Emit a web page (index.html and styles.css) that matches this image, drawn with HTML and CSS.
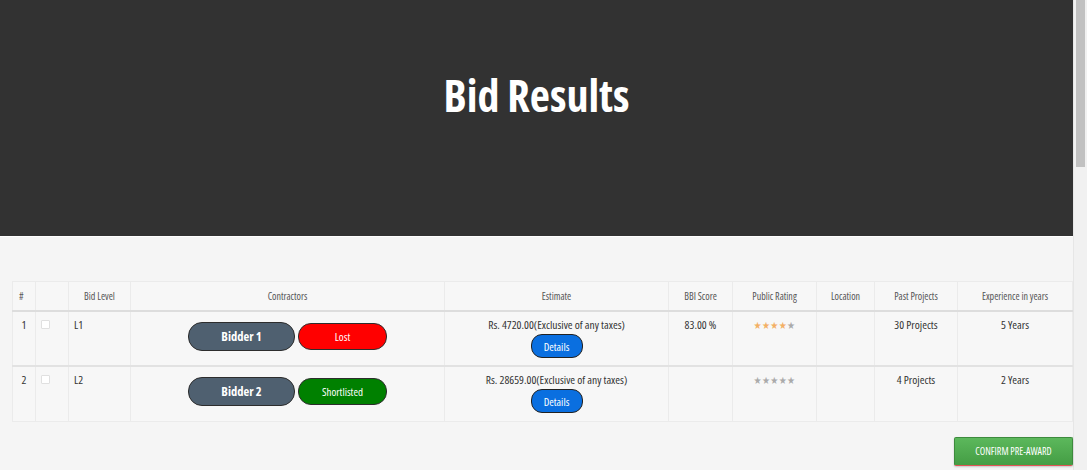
FILE: index.html
```html
<!DOCTYPE html>
<html lang="en">
    <head>
        <meta charset="UTF-8">
        <meta name="viewport" content="width=device-width, initial-scale=1.0">
        <title>Bid Results</title>
        <link rel="stylesheet" href="styles.css">
    </head>
<body>
    <div class="window">
        <div class="page">
            <header class="hero">
                <h1>Bid Results</h1>
            </header>

            <div class="container">
                <table class="results">
                    <colgroup>
                        <col style="width: 23px">
                        <col style="width: 33px">
                        <col style="width: 62px">
                        <col style="width: 314px">
                        <col style="width: 224px">
                        <col style="width: 64px">
                        <col style="width: 84px">
                        <col style="width: 58px">
                        <col style="width: 83px">
                        <col style="width: 115px">
                    </colgroup>
                    <thead>
                        <tr>
                            <th class="num">#</th>
                            <th></th>
                            <th>Bid Level</th>
                            <th>Contractors</th>
                            <th>Estimate</th>
                            <th>BBI Score</th>
                            <th>Public Rating</th>
                            <th>Location</th>
                            <th>Past Projects</th>
                            <th>Experience in years</th>
                        </tr>
                    </thead>
                    <tbody>
                        <tr>
                            <td class="center">1</td>
                            <td><input type="checkbox" class="pick"></td>
                            <td>L1</td>
                            <td class="center">
                                <div class="contractor">
                                    <button class="bidder">Bidder 1</button>
                                    <button class="status lost">Lost</button>
                                </div>
                            </td>
                            <td class="center">
                                Rs. 4720.00(Exclusive of any taxes)
                                <div><button class="details">Details</button></div>
                            </td>
                            <td class="center">83.00 %</td>
                            <td class="center">
                                <span class="stars"><span class="on">★★★★</span>★</span>
                            </td>
                            <td></td>
                            <td class="center">30 Projects</td>
                            <td class="center">5 Years</td>
                        </tr>
                        <tr>
                            <td class="center">2</td>
                            <td><input type="checkbox" class="pick"></td>
                            <td>L2</td>
                            <td class="center">
                                <div class="contractor">
                                    <button class="bidder">Bidder 2</button>
                                    <button class="status shortlisted">Shortlisted</button>
                                </div>
                            </td>
                            <td class="center">
                                Rs. 28659.00(Exclusive of any taxes)
                                <div><button class="details">Details</button></div>
                            </td>
                            <td></td>
                            <td class="center">
                                <span class="stars">★★★★★</span>
                            </td>
                            <td></td>
                            <td class="center">4 Projects</td>
                            <td class="center">2 Years</td>
                        </tr>
                    </tbody>
                </table>

                <div class="actions">
                    <button class="confirm">CONFIRM PRE-AWARD</button>
                </div>
            </div>
        </div>

        <div class="scrollbar">
            <div class="thumb"></div>
        </div>
    </div>
</body>
</html>
```

FILE: styles.css
```css
    html, body {
        height: 100%;
    }
    body {
        font-family: "Open Sans", Arial, sans-serif;
        font-stretch: 75%;
        margin: 0;
        padding: 0;
        background-color: #f5f5f5;
        color: #333;
        overflow: hidden;
    }
    .window {
        display: flex;
        height: 470px;
    }
    .page {
        flex: 1;
        border-right: 1px solid #e6e6e6;
    }
    .hero {
        background-color: #323232;
        height: 237px;
        border-bottom: 1px solid #ffffff;
        box-sizing: border-box;
        text-align: center;
        padding-top: 67px;
    }
    .hero h1 {
        margin: 0;
        color: #ffffff;
        font-size: 44px;
        font-weight: 700;
        line-height: 56px;
    }
    .container {
        padding: 44px 0 0 12px;
    }
    .results {
        width: 1060px;
        table-layout: fixed;
        border-collapse: collapse;
        background-color: #f7f7f7;
        font-size: 11.5px;
    }
    .results th {
        height: 28px;
        font-size: 10px;
        font-weight: 400;
        color: #555;
        text-align: center;
        border: 1px solid #ebebeb;
        border-bottom: 2px solid #dddddd;
        padding: 0 4px;
    }
    .results th.num {
        text-align: left;
        padding-left: 6px;
    }
    .results td {
        height: 55px;
        vertical-align: top;
        padding: 5px 5px 0;
        border: 1px solid #ebebeb;
        border-top: 2px solid #e2e2e2;
        box-sizing: border-box;
    }
    .center {
        text-align: center;
    }
    .pick {
        appearance: none;
        width: 9px;
        height: 9px;
        margin: 1px 0 0;
        background: #ffffff;
        border: 1px solid #e0e0e0;
        border-radius: 1px;
    }
    .contractor {
        display: flex;
        justify-content: center;
        gap: 3px;
        margin-top: 5px;
    }
    .bidder {
        width: 107px;
        height: 29px;
        background-color: #4f6070;
        color: #ffffff;
        font-family: inherit;
        font-stretch: inherit;
        font-size: 12.5px;
        font-weight: 700;
        border: 1px solid #2d2d2d;
        border-radius: 14px;
    }
    .status {
        width: 89px;
        height: 27px;
        margin-top: 1px;
        color: #ffffff;
        font-family: inherit;
        font-stretch: inherit;
        font-size: 11px;
        border: 1px solid #2d2d2d;
        border-radius: 13px;
    }
    .lost {
        background-color: #ff0000;
    }
    .shortlisted {
        background-color: #008000;
    }
    .details {
        margin-top: 2px;
        width: 52px;
        height: 24px;
        background-color: #0a6fe0;
        color: #ffffff;
        font-family: inherit;
        font-stretch: inherit;
        font-size: 11px;
        border: 1px solid #222;
        border-radius: 11px;
    }
    .stars {
        color: #aaaaaa;
        font-size: 10px;
        letter-spacing: 0.3px;
        font-family: "DejaVu Sans", sans-serif;
    }
    .stars .on {
        color: #f3b065;
    }
    .actions {
        display: flex;
        justify-content: flex-end;
        margin-top: 15px;
    }
    .confirm {
        width: 119px;
        height: 29px;
        background: linear-gradient(#5cb85c, #449d44);
        color: #ffffff;
        font-family: inherit;
        font-stretch: inherit;
        font-size: 10px;
        border: 1px solid #3d8b3d;
        border-bottom: 1px solid #e05555;
        border-radius: 2px;
        box-shadow: 0 1px 2px rgba(0, 0, 0, 0.2);
    }
    .scrollbar {
        width: 13px;
        background-color: #f1f1f1;
        padding: 0 2px;
    }
    .thumb {
        height: 167px;
        background-color: #c1c1c1;
    }
```
